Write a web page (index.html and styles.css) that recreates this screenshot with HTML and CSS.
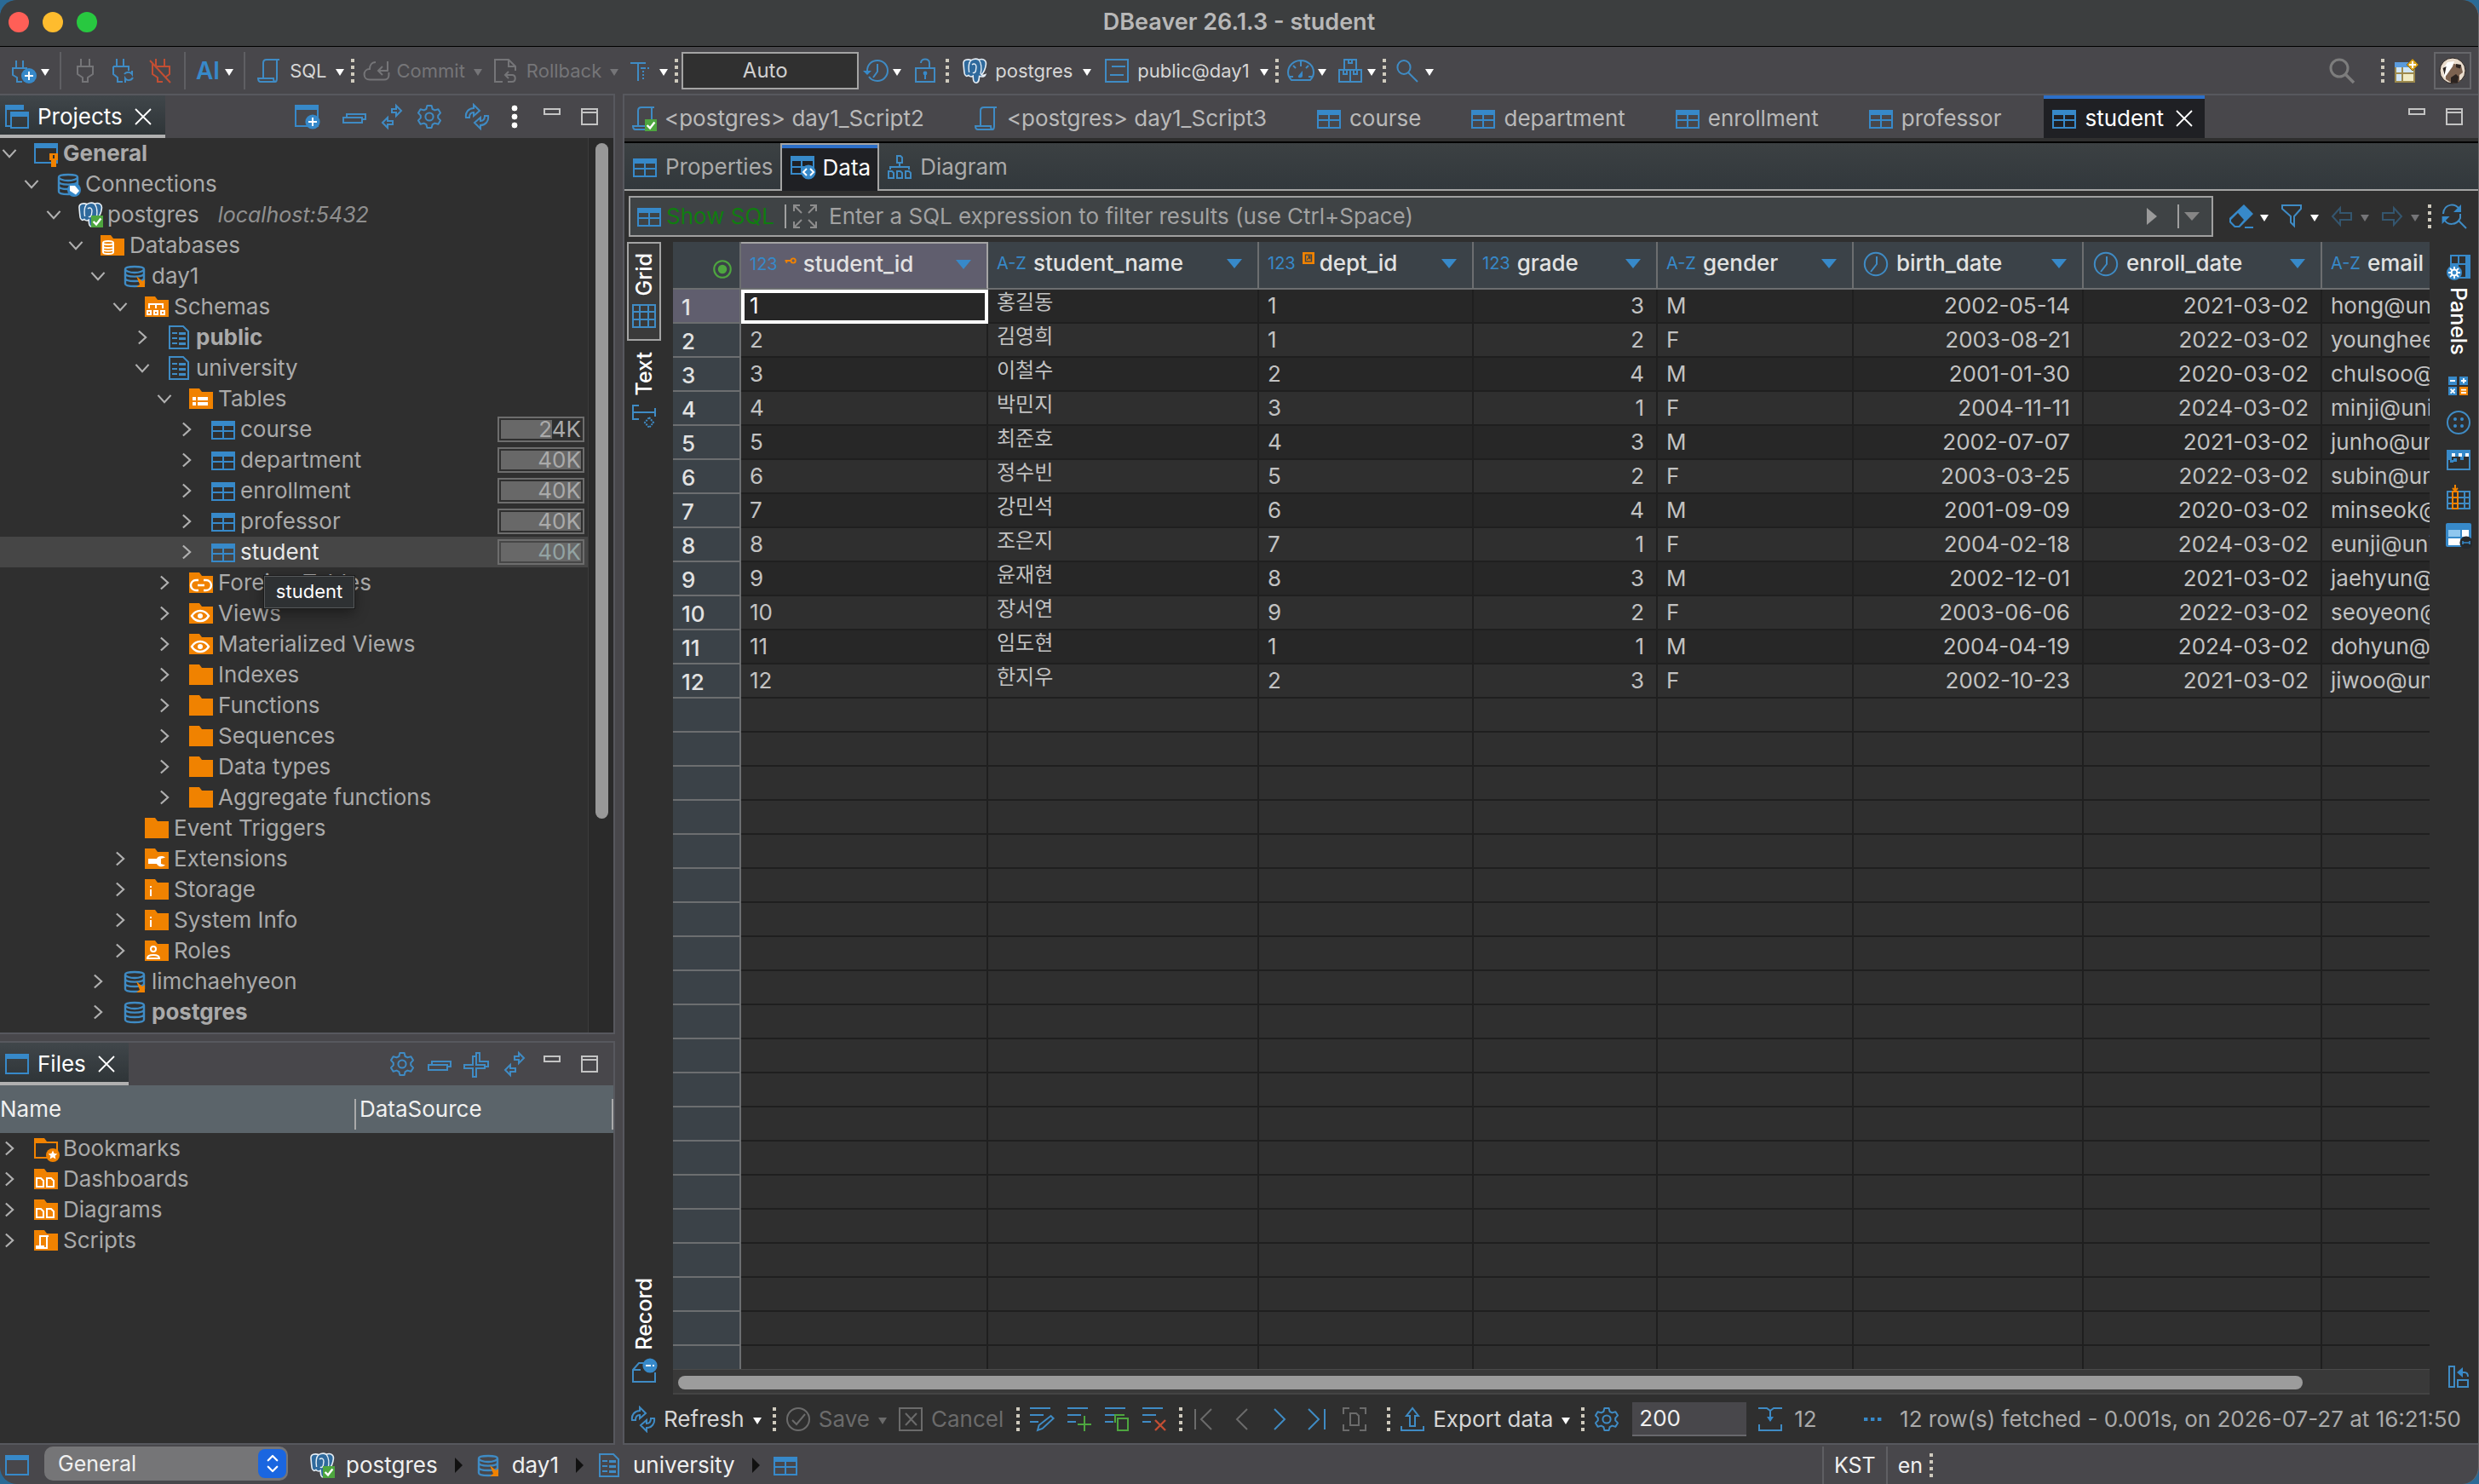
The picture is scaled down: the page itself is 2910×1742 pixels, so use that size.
FILE: index.html
```html
<!DOCTYPE html>
<html lang="en">
<head>
  <meta charset="UTF-8">
  <title>DBeaver 26.1.3 - student</title>
  <link rel="stylesheet" href="styles.css">
</head>
<body>
<svg class="sprite" xmlns="http://www.w3.org/2000/svg">
  <defs>
    <symbol id="table" viewBox="0 0 16 16"><path fill="#3789c9" d="M1 3h14v11H1zM2 6v2.500h5.500V6zm6.500 0v2.500H14V6zM2 9.500V13h5.500V9.500zm6.500 0V13H14V9.500z" fill-rule="evenodd"/></symbol>
    <symbol id="folder" viewBox="0 0 16 16"><path fill="#f08200" d="M1 2h6l1.500 2H15v10H1z"/></symbol>
    <symbol id="f-db" viewBox="0 0 16 16"><use href="#folder"/><path fill="none" stroke="#fff" d="M2.500 6.500v5.500c0 .7 1.300 1 3 1s3-.3 3-1V6.500c0-.7-1.300-1-3-1s-3 .3-3 1c0 .7 1.300 1 3 1s3-.3 3-1M2.500 8.500c0 .7 1.300 1 3 1s3-.3 3-1M2.500 10.300c0 .7 1.300 1 3 1s3-.3 3-1"/></symbol>
    <symbol id="f-schema" viewBox="0 0 16 16"><use href="#folder"/><path fill="none" stroke="#fff" d="M3.500 9V6.500h8V9M7.500 6.500V9M2.500 10.500h2v2h-2zM6.500 10.500h2v2h-2zM10.500 10.500h2v2h-2z"/></symbol>
    <symbol id="f-list" viewBox="0 0 16 16"><use href="#folder"/><path fill="#fff" d="M3 7h2v2H3zm3 0h6v2H6zM3 10h2v2H3zm3 0h6v2H6z"/></symbol>
    <symbol id="f-link" viewBox="0 0 16 16"><use href="#folder"/><path fill="none" stroke="#fff" stroke-width="1.200" d="M6.500 6.500H5a3 3 0 0 0 0 6h1.500M9.500 6.500H11a3 3 0 0 1 0 6H9.500M6 9.500h4"/></symbol>
    <symbol id="f-eye" viewBox="0 0 16 16"><use href="#folder"/><path fill="none" stroke="#fff" stroke-width="1.200" d="M2.500 9.500C5 5.500 10 5.500 12.500 9.500 10 13.500 5 13.500 2.500 9.500z"/><circle cx="7.500" cy="9.500" r="1.500" fill="#fff"/></symbol>
    <symbol id="f-wrench" viewBox="0 0 16 16"><use href="#folder"/><path fill="#fff" d="M3 8h5c.5-1.500 3-2.200 5-.8l-2.500.8v3l2.500.8c-2 1.500-4.500.8-5-.8H3z"/></symbol>
    <symbol id="f-info" viewBox="0 0 16 16"><use href="#folder"/><path fill="#fff" d="M4 6h1v1H4zm0 2h1v4H4z"/></symbol>
    <symbol id="f-user" viewBox="0 0 16 16"><use href="#folder"/><circle cx="6" cy="7" r="1.500" fill="none" stroke="#fff"/><path fill="none" stroke="#fff" d="M2.500 12.500c0-1.500 1.500-2 3.500-2s3.500.5 3.500 2z"/></symbol>
    <symbol id="f-docs" viewBox="0 0 16 16"><use href="#folder"/><path fill="none" stroke="#fff" d="M2.500 7.500H5l1.500 1.500v3.500h-4zM8.500 7.500H11l1.500 1.500v3.500h-4z"/></symbol>
    <symbol id="f-script" viewBox="0 0 16 16"><use href="#folder"/><path fill="none" stroke="#fff" d="M9.500 5.500h-5v5.500M2.500 11.500h4v1h-4zM8.500 5.500v7H6"/></symbol>
    <symbol id="f-star" viewBox="0 0 16 16"><path fill="#f08200" d="M1 2h6l1.500 2H15v10H1zm1 3v8h12V5z" fill-rule="evenodd"/><circle cx="12" cy="12" r="4" fill="#f08200"/><path fill="#fff" d="M12 9.300l.8 1.700 1.900.2-1.400 1.200.4 1.900-1.700-1-1.700 1 .4-1.900-1.400-1.200 1.900-.2z"/></symbol>
    <symbol id="db" viewBox="0 0 16 16"><path fill="none" stroke="#3f8bc4" stroke-width="1.200" d="M2.500 4v8.500c0 1 2.200 1.500 5.500 1.500s5.500-.5 5.500-1.500V4M2.500 4C2.500 3 5 2.500 8 2.500s5.500.5 5.500 1.500S11 6 8 6 2.500 5 2.500 4zM2.500 6.500C2.500 7.700 5 8.300 8 8.300s5.500-.6 5.500-1.800M2.500 9.200c0 1.200 2.500 1.800 5.500 1.800s5.500-.6 5.500-1.800"/></symbol>
    <symbol id="db-link" viewBox="0 0 16 16"><use href="#db"/><path fill="#f08200" d="M9 8l3.500 3 1.500-1v4.500h-5l2-1.500z"/></symbol>
    <symbol id="db-tag" viewBox="0 0 16 16"><use href="#db"/><circle cx="11.500" cy="11.500" r="4" fill="#3789c9"/><path fill="#fff" d="M9 9h3l2.500 3-2 2.200L9 12z"/></symbol>
    <symbol id="schema" viewBox="0 0 16 16"><path fill="none" stroke="#3f8bc4" d="M2.500 1.500h8l3 3v10h-11z"/><path fill="#3f8bc4" d="M4 5h3v1H4zm0 3h3v1H4zm0 3h3v1H4zM8 5h4v1.500H8zm0 3h4v1.500H8zm0 3h4v1.500H8z"/></symbol>
    <symbol id="window" viewBox="0 0 16 16"><path fill="#3789c9" d="M1 2h14v12H1zm1 3v8h12V5z" fill-rule="evenodd"/></symbol>
    <symbol id="project" viewBox="0 0 16 16"><use href="#window"/><path fill="#f08200" d="M10 8h5v4h-1v4h-3v-4h-1zm2 1v2h1V9z" fill-rule="evenodd"/></symbol>
    <symbol id="projects" viewBox="0 0 16 16"><path fill="#3789c9" d="M1 1h11v3H2v9h2v1H1zM4 5h11v10H4zm1 3v6h9V8z" fill-rule="evenodd"/></symbol>
    <symbol id="win-plus" viewBox="0 0 16 16"><path fill="#3789c9" d="M1 1h14v13H1zm1 3v9h12V4z" fill-rule="evenodd"/><circle cx="11.500" cy="11" r="4.300" fill="#3789c9"/><path stroke="#fff" d="M11.500 8.500v5M9 11h5"/></symbol>
    <symbol id="check-badge" viewBox="0 0 16 16"><path fill="#4ea63f" d="M8.500 8.500h7v7h-7z"/><path fill="none" stroke="#fff" stroke-width="1.200" d="M9.800 12l1.700 1.700 2.700-3.500"/></symbol>
    <symbol id="pg" viewBox="0 0 16 16"><path fill="#2f6a9d" stroke="#e6eef5" stroke-width=".8" d="M1.500 4C1.200 1.500 4 1 6 1.800 8 .8 9.500 1 10.500 1.600c2.500-1 4.500.4 4.200 2.600-.3 2.500-1.500 5-2.700 6.200.8.300 1.800.2 2.300 0-.6 1.300-2 1.300-3.500.9-.2 2-.2 3.600-1.800 3.800-1.700 0-1.800-1.500-1.900-4-.8.600-2 .3-2.600-.4-1 .8-1.700.6-2.300-.7C1.800 8.500 1.700 6 1.500 4z"/><path fill="none" stroke="#e6eef5" stroke-width=".7" d="M6 1.800C4.300 3.500 4.300 6 4.800 9M10.500 1.600c1.500 2 1.700 5.500 1 8.500M6.500 4.500c1-1 2.500-.5 2.500 1.200L8.700 8c-.2 1-.9 1.400-1.800 1.200"/></symbol>
    <symbol id="pg-ok" viewBox="0 0 16 16"><use href="#pg" /><use href="#check-badge"/></symbol>
    <symbol id="script" viewBox="0 0 16 16"><path fill="none" stroke="#3f8bc4" d="M14 1.500H6.500c-1.500 0-2 .5-2 2v9M1.500 12.500h9c0 1 .3 2 1 2H3c-1 0-1.500-.7-1.500-2zM12.500 1.500v11c0 1.300-.3 2-1 2"/></symbol>
    <symbol id="script-ok" viewBox="0 0 16 16"><use href="#script"/><use href="#check-badge"/></symbol>
    <symbol id="plug" viewBox="0 0 16 16"><path fill="none" stroke="currentColor" d="M5.500 1v4M10.500 1v4M3.500 5.500h9v4.500l-3 2v2.500h-3V12l-3-2z"/></symbol>
    <symbol id="plug-new" viewBox="0 0 16 16"><path fill="none" stroke="#3f8bc4" d="M3.500 2v4M7.500 2v4M1.500 6.500h8v2M1.500 6v4.500L4 12v2.500h3"/><circle cx="11" cy="11" r="4.500" fill="#3789c9"/><path stroke="#fff" d="M11 8.500v5M8.500 11h5"/></symbol>
    <symbol id="plug-re" viewBox="0 0 16 16"><path fill="none" stroke="#3f8bc4" d="M4.500 1v4M8.500 1v4M2.500 5.500h9V8M2.500 5.500V10l2.500 2v2.500h3M9 10c1-1.500 3.500-1.500 4.500 0V8M14 12c-1 2-3.500 2-4.500.5V15"/></symbol>
    <symbol id="plug-off" viewBox="0 0 16 16"><path fill="none" stroke="#c24e33" d="M5.500 1v4M10.500 1v4M3.500 4v6l3 2v2.500h3M5 5.500h8.500V10l-2 1.500M2 2l12 13"/></symbol>
    <symbol id="cloud" viewBox="0 0 16 16"><path fill="none" stroke="currentColor" d="M7.500 3C5 3 4 5 4 7 2 7 .8 8.500.8 10.200S2 13.300 4 13.300h8.500c1.500 0 2.700-1 2.700-2.500V9M14.500 2.500V8H9M11.500 5.500L9 8l2.500 2.500"/></symbol>
    <symbol id="rollback" viewBox="0 0 16 16"><path fill="none" stroke="currentColor" d="M6 14.500H1.500v-13h8l4 4V8M9.500 1.500v4h4M7.500 10.500h4c2.500 0 2.500 4 0 4H9M9.500 8.500l-2 2 2 2"/></symbol>
    <symbol id="tmode" viewBox="0 0 16 16"><path fill="none" stroke="#3f8bc4" d="M1 3.500h9M5.500 3v11"/><path fill="none" stroke="#3f8bc4" stroke-dasharray="1 1" d="M7 6.500h5M8.500 6v8"/></symbol>
    <symbol id="history" viewBox="0 0 16 16"><path fill="none" stroke="#3f8bc4" d="M3 8C3 4.500 5.500 2 9 2s6 2.700 6 6-2.700 6-6 6c-2 0-4-1-5-2.500M9 4v4.500L6.500 12"/><path fill="#3789c9" d="M.5 8h5L3 10.500z"/></symbol>
    <symbol id="lock" viewBox="0 0 16 16"><path fill="none" stroke="#3f8bc4" d="M2.500 6.500h11v8h-11zM5.500 3.500c0-3 5-3 5 0v3"/><circle cx="8" cy="9.500" r="1.200" fill="#3789c9"/><path stroke="#3789c9" d="M8 10v3"/></symbol>
    <symbol id="sheet" viewBox="0 0 16 16"><path fill="none" stroke="#3f8bc4" d="M1.500 1.500h13v13h-13zM5 5.500h8M4 10.500h8"/></symbol>
    <symbol id="gauge" viewBox="0 0 16 16"><path fill="none" stroke="#3f8bc4" d="M2.500 13.500C1 12 .5 10.500.5 9a7.500 7 0 0 1 15 0c0 1.500-.5 3-2 4.500zM8 2.500v3M3.500 5l1.500 1.500M12.500 5L11 6.500M1.500 11.500h2M12.500 11.500h2"/><path fill="#3789c9" d="M9 8v3c0 1.500-3 1.500-2.500 0z"/></symbol>
    <symbol id="boxes" viewBox="0 0 16 16"><path fill="none" stroke="#3f8bc4" d="M4.500 1.500h7v6h-7zM7 1.500v2h2v-2M1.500 7.500h13v7h-13zM8 7.500v7M4 8v2h2V8M10 8v2h2V8"/></symbol>
    <symbol id="search" viewBox="0 0 16 16"><ellipse cx="5.500" cy="6" rx="3.800" ry="4" fill="none" stroke="#3f8bc4"/><path stroke="#3f8bc4" d="M8 9l5.500 5.500"/></symbol>
    <symbol id="search-lg" viewBox="0 0 16 16"><circle cx="6.500" cy="6.500" r="5" fill="none" stroke="#7d7d7d" stroke-width="1.500"/><path stroke="#7d7d7d" stroke-width="1.800" d="M10 10l5 5"/></symbol>
    <symbol id="persp" viewBox="0 0 16 16"><path fill="#9d8a4d" d="M1 3h12v12H1z"/><path fill="#5b9bdc" d="M1 3h10v3H1z"/><path fill="#cfe5f5" d="M2 6h3v3H2zM6 6h6v3H6zM2 10h3v4H2z"/><path fill="#f1ecc4" d="M6 10h6v4H6z"/><path fill="#d9a520" stroke="#8a6513" stroke-width=".5" d="M11.500 1L15 4.500 11.500 8 8 4.500z"/><path stroke="#fff" d="M11.500 2.500v4M9.500 4.500h4"/></symbol>
    <symbol id="beaver" viewBox="0 0 16 16"><circle cx="8" cy="8" r="7.500" fill="#e9dccd" stroke="#2b2320" stroke-width=".5"/><path fill="#7c6250" d="M4 6l3-2.500 6 1.500 1 4-2 1.500v4l-4 1-4-2.500z"/><path fill="#fff" d="M5 3l4-.5-1 3-3.500 5L3 12 2.500 7z"/><path fill="#2b2320" d="M10 4l3 .5-.5 2.300L10 6zM2.300 6.500l2-1-1 5zM7 12l3-2 1.500 1.500-.5 3.500-4 .5z"/></symbol>
    <symbol id="collapse" viewBox="0 0 16 16"><path fill="none" stroke="#3f8bc4" d="M1.500 8.500h11v3h-11zM3.500 8V6.500h11v3H13"/></symbol>
    <symbol id="expand" viewBox="0 0 16 16"><path fill="none" stroke="#3f8bc4" d="M.5 8.500h5v-5h2v5h5v2h-5v5h-2v-5h-5zM7.500 3V1.500h2v5h5v3h-1.500"/></symbol>
    <symbol id="swap" viewBox="0 0 16 16"><path fill="none" stroke="#3f8bc4" d="M2.500 11.500l3-3v2h3v2h-3v2zM13.500 4.500l-3-3v2H8v2h2.500v2z"/></symbol>
    <symbol id="gear" viewBox="0 0 16 16"><path fill="none" stroke="#3f8bc4" stroke-linejoin="round" d="M6.700 1.500h2.600l.5 2 1.400.7 2-.6 1.300 2.200-1.400 1.500v1.400l1.400 1.500-1.300 2.200-2-.6-1.400.8-.5 1.900H6.700l-.5-1.900-1.400-.8-2 .6-1.300-2.200 1.400-1.500V7.300L1.500 5.800l1.300-2.200 2 .6 1.400-.7z"/><circle cx="8" cy="8" r="2.300" fill="none" stroke="#3f8bc4"/></symbol>
    <symbol id="refresh" viewBox="0 0 16 16"><path fill="none" stroke="#3f8bc4" d="M1.500 8.500c-.5-3 1.500-5.500 4.500-5.500V1l3.500 3.500L6 7.500V5.500c-1.500 0-2.500 1-2.500 3zM14.500 7.500c.5 3-1.500 5.500-4.500 5.500v2l-3.500-3.500L10 8.500v2c1.500 0 2.500-1 2.500-3z"/></symbol>
    <symbol id="kebab" viewBox="0 0 16 16"><g fill="#fff" stroke="#222" stroke-width=".4"><circle cx="8" cy="3" r="2"/><circle cx="8" cy="8" r="2"/><circle cx="8" cy="13" r="2"/></g></symbol>
    <symbol id="min" viewBox="0 0 16 16"><path fill="none" stroke="#c4c4c4" d="M3.500 3.500h9v3h-9z"/></symbol>
    <symbol id="max" viewBox="0 0 16 16"><path fill="none" stroke="#c4c4c4" d="M3.500 3.500h9v9h-9zM3.500 5.500h9"/></symbol>
    <symbol id="close" viewBox="0 0 16 16"><path fill="none" stroke="#fff" stroke-width=".9" d="M3.500 3.500l9 9M12.500 3.500l-9 9"/></symbol>
    <symbol id="chev-d" viewBox="0 0 16 16"><path fill="none" stroke="#b0b0b0" stroke-width="1.600" d="M2.500 5L8 11l5.500-6"/></symbol>
    <symbol id="chev-r" viewBox="0 0 16 16"><path fill="none" stroke="#b0b0b0" stroke-width="1.600" d="M5 2.500L11 8l-6 5.500"/></symbol>
    <symbol id="data" viewBox="0 0 16 16"><path fill="#3789c9" d="M1 1h14v11H1zM2 4v3h5V4zm6 0v3h6V4zM2 8v3h5V8z" fill-rule="evenodd"/><circle cx="11.500" cy="10.500" r="4.300" fill="#3789c9"/><path fill="none" stroke="#fff" d="M10.500 8.500l-2 2 2 2M12.500 8.500l2 2-2 2"/></symbol>
    <symbol id="diagram" viewBox="0 0 16 16"><path fill="none" stroke="#3f8bc4" d="M6.500 1.500h2l1 1v3h-3zM8 5.500v3M2.500 9.500V8h11v1.500M1.500 10.500h2l1 1v3h-3zM6.500 10.500h2l1 1v3h-3zM11.500 10.500h2l1 1v3h-3z"/></symbol>
    <symbol id="fullscreen" viewBox="0 0 16 16"><path fill="none" stroke="#8d8d8d" d="M1.500 5V1.500H5M2 2l4 4M11 1.500h3.500V5M14 2l-4 4M1.500 11v3.500H5M2 14l4-4M11 14.500h3.500V11M14 14l-4-4"/></symbol>
    <symbol id="eraser" viewBox="0 0 16 16"><path fill="#3789c9" d="M9.500 1L15 6.500 7 14.500H4L1 11.500V9zM6 6L2 10v1l2.500 2.500h2L9.500 10z" fill-rule="evenodd"/><path stroke="#3789c9" d="M10 14.500h5"/></symbol>
    <symbol id="funnel" viewBox="0 0 16 16"><path fill="none" stroke="#3f8bc4" d="M2.500 1.500h11v2L9.500 8v5.500l-2-2V8l-5-4.500z"/></symbol>
    <symbol id="left" viewBox="0 0 16 16"><path fill="none" stroke="#34566f" d="M2.500 8l4.500-5v3h6.500v4H7v3z"/></symbol>
    <symbol id="right" viewBox="0 0 16 16"><path fill="none" stroke="#34566f" d="M13.500 8L9 3v3H2.500v4H9v3z"/></symbol>
    <symbol id="re-search" viewBox="0 0 16 16"><path fill="none" stroke="#3f8bc4" d="M1.500 6.500C2 0 9.500 0 11 4M2 9.500c1.500 4 7.500 4 9.500-.5V6.500M10.500 10.500l4.500 4.500"/><path fill="#3789c9" d="M12 1v4.500H7.500zM.8 12.500V8h4.500z"/></symbol>
    <symbol id="clock" viewBox="0 0 16 16"><circle cx="8" cy="8" r="6.600" fill="none" stroke="#3f8bc4"/><path fill="none" stroke="#3f8bc4" d="M8.500 3.500V8L5 12.500"/></symbol>
    <symbol id="key" viewBox="0 0 8 8"><circle cx="5.800" cy="4" r="1.500" fill="none" stroke="#f08200" stroke-width="1.100"/><path fill="none" stroke="#f08200" stroke-width="1.100" d="M.3 4H4.500M1.300 4v1.500"/></symbol>
    <symbol id="fkey" viewBox="0 0 8 8"><path fill="#f08200" d="M0 0h8v8H0z"/><path fill="none" stroke="#3b4248" stroke-width=".8" d="M2 1.800h4v4.400H2zM3 5l2-2M3.500 2.800H5v2"/></symbol>
    <symbol id="grid" viewBox="0 0 16 16"><path fill="none" stroke="#3f8bc4" d="M1.500 1.500h13v13h-13zM1.500 5.500h13M1.500 10h13M5.500 1.500v13M10.500 1.500v13"/></symbol>
    <symbol id="text" viewBox="0 0 16 16"><path fill="none" stroke="#3f8bc4" d="M5 1.500H1.500v8H5M2 5.500h12.500M14.500 3v5"/><path fill="none" stroke="#3f8bc4" stroke-dasharray="1 .6" d="M11 8.500l2.500 3-2.500 3-2.500-3z"/></symbol>
    <symbol id="record" viewBox="0 0 16 16"><path fill="none" stroke="#3f8bc4" d="M8 3.500H5l-3.500 4v7h13V9M1.500 7.500H6"/><circle cx="11.500" cy="5" r="4.300" fill="#3789c9"/><path fill="#fff" d="M9 4.500h3v1H9zM13 4.500h1v1h-1z"/></symbol>
    <symbol id="panels" viewBox="0 0 16 16"><path fill="#3789c9" d="M3 1h12v14H3zM4 2v4h3.500V2zm4.500 0v4H12V2zM8 7v7h4V7z" fill-rule="evenodd"/><circle cx="5.500" cy="11.500" r="4.500" fill="#3789c9"/><circle cx="5.500" cy="11.500" r="1.700" fill="none" stroke="#fff"/><path stroke="#fff" stroke-width=".9" d="M5.500 8v1.500M5.500 13.500V15M2 11.500h1.500M7.500 11.500H9M3 9l1.200 1.200M6.800 12.800L8 14M8 9l-1.200 1.200M4.200 12.800L3 14"/></symbol>
    <symbol id="calc" viewBox="0 0 16 16"><path fill="#3789c9" d="M2 3h5v5H2zM8.500 3h5v5h-5zM2 9h5v5H2z"/><path fill="#f08200" d="M8.500 9h5v5h-5z"/><path stroke="#fff" stroke-width=".9" d="M3 5.500h3M9.500 5.500h3M11 4v3M3.300 10.300l2.500 2.500M5.800 10.300l-2.500 2.500M9.500 10.800h3M9.500 12.500h3"/></symbol>
    <symbol id="button" viewBox="0 0 16 16"><circle cx="8" cy="8" r="6.500" fill="none" stroke="#3f8bc4"/><g fill="#3789c9"><circle cx="6" cy="6" r="1"/><circle cx="10" cy="6" r="1"/><circle cx="6" cy="10" r="1"/><circle cx="10" cy="10" r="1"/></g></symbol>
    <symbol id="meta" viewBox="0 0 16 16"><path fill="none" stroke="#3f8bc4" d="M1.500 2.500h13v11h-13z"/><path fill="#3789c9" d="M1 2h14v4H1zM2 6h2v2H2zm3 1h2v2H5zm4-1h2v2H9zM3 8h2v1.500H3z"/><path fill="#fff" d="M4 4h2v2H4zm4 0h2v2H8zm4 0h2v2h-2z"/></symbol>
    <symbol id="colcut" viewBox="0 0 16 16"><path fill="none" stroke="#3f8bc4" d="M1.500 4.500h13v10h-13zM1.500 8h13M1.500 11.500h13M11.500 4v10"/><path fill="none" stroke="#f08200" d="M4.500 4.500h3v10h-3zM4.500 8h3M4.500 11.500h3M6 .5V4M4.500 2.500L6 4l1.500-1.500"/></symbol>
    <symbol id="panel2" viewBox="0 0 16 16"><rect x=".5" y="1" width="15" height="14" rx="1" fill="#3789c9"/><path fill="#8fc7ef" d="M2 5h7v4H2z"/><path fill="#fff" d="M10 5h4v4h-4zM2 10h7v4H2z"/><circle cx="12.500" cy="12.500" r="3.800" fill="#26292c"/><path stroke="#3789c9" stroke-width=".8" d="M10.500 12.500h4M10.500 11.500v2M14.500 11.500v2"/></symbol>
    <symbol id="layout" viewBox="0 0 16 16"><path fill="none" stroke="#3f8bc4" d="M2.500 1.500h3v12h-3zM7.500 9.500h6v4h-6zM8 5h3.500c1.500 0 2 1 2 2.500"/><path fill="#3789c9" d="M10.500 2v6L7 5z"/></symbol>
    <symbol id="check" viewBox="0 0 16 16"><circle cx="8" cy="8" r="6.500" fill="none" stroke="currentColor"/><path fill="none" stroke="currentColor" d="M4.500 8.500l2.500 2.500 5-6"/></symbol>
    <symbol id="xbox" viewBox="0 0 16 16"><path fill="none" stroke="currentColor" d="M1.500 1.500h13v13h-13zM5 4.500l6.500 7M11.500 4.500L5 11.500"/></symbol>
    <symbol id="lines" viewBox="0 0 16 16"><path stroke="#3f8bc4" d="M1 1.500h12M1 5.500h8M1 9.500h5"/></symbol>
    <symbol id="row-edit" viewBox="0 0 16 16"><use href="#lines"/><path fill="none" stroke="#3f8bc4" d="M5.500 14.500l.8-3 7-5.500 1.500 1.500-6.500 6z"/></symbol>
    <symbol id="row-add" viewBox="0 0 16 16"><use href="#lines"/><path stroke="#4ea63f" d="M11 6v9M7 11h8"/></symbol>
    <symbol id="row-copy" viewBox="0 0 16 16"><use href="#lines"/><path fill="none" stroke="#4ea63f" d="M7 10V5.500h5.500M8.500 7.500h6v7h-6z"/></symbol>
    <symbol id="row-del" viewBox="0 0 16 16"><use href="#lines"/><path stroke="#c24e33" stroke-width="1.200" d="M8.500 8.500l6 6M14.500 8.500l-6 6"/></symbol>
    <symbol id="first" viewBox="0 0 16 16"><path fill="none" stroke="#6b6b6b" d="M2.500 2v12M12 2L6 8l6 6"/></symbol>
    <symbol id="prev" viewBox="0 0 16 16"><path fill="none" stroke="#6b6b6b" d="M11 2L5 8l6 6"/></symbol>
    <symbol id="next" viewBox="0 0 16 16"><path fill="none" stroke="#3f8bc4" d="M5 2l6 6-6 6"/></symbol>
    <symbol id="last" viewBox="0 0 16 16"><path fill="none" stroke="#3f8bc4" d="M3 2l6 6-6 6M12.500 2v12"/></symbol>
    <symbol id="focus" viewBox="0 0 16 16"><path fill="none" stroke="#6b6b6b" d="M1.500 5V1.500H5M11 1.500h3.500V5M1.500 11v3.500H5M11 14.500h3.500V11M5.500 4.500H9l1.500 1.500v5.500h-5z"/></symbol>
    <symbol id="export" viewBox="0 0 16 16"><path fill="none" stroke="#3f8bc4" d="M8 1.500L4.500 6h2v6h3V6h2zM1.500 12v2.500h13V12"/></symbol>
    <symbol id="count" viewBox="0 0 16 16"><path fill="none" stroke="#3f8bc4" d="M1 1.500h5l2 1.500 2-1.500h5M8 3v6M1.500 11v3.500h13V11"/><path fill="#3789c9" d="M6 6.500h4L8 9.500z"/></symbol>
    <symbol id="more" viewBox="0 0 16 16"><path fill="#3789c9" d="M3 7h2.200v2H3zm4 0h2.200v2H7zm4 0h2.200v2H11z"/></symbol>
    <symbol id="target" viewBox="0 0 16 16"><circle cx="8" cy="8" r="6.500" fill="none" stroke="#4ea63f" stroke-width="1.400"/><circle cx="8" cy="8" r="3.500" fill="#4ea63f"/></symbol>
    <symbol id="updown" viewBox="0 0 16 16"><path fill="none" stroke="#fff" stroke-width="1.500" stroke-linecap="round" stroke-linejoin="round" d="M4.500 5.500L8 2l3.500 3.500M4.500 10.500L8 14l3.500-3.500"/></symbol>
  </defs>
</svg>

<div class="window">
  <header class="titlebar">
    <div class="lights"><span class="light red"></span><span class="light yellow"></span><span class="light green"></span></div>
    <h1>DBeaver 26.1.3 - student</h1>
  </header>

  <div class="toolbar">
    <button class="tool" aria-label="New connection"><svg class="icon"><use href="#plug-new"/></svg><i class="arrow"></i></button>
    <span class="sep"></span>
    <button class="tool off" aria-label="Connect"><svg class="icon"><use href="#plug"/></svg></button>
    <button class="tool" aria-label="Reconnect"><svg class="icon"><use href="#plug-re"/></svg></button>
    <button class="tool" aria-label="Disconnect"><svg class="icon"><use href="#plug-off"/></svg></button>
    <span class="sep"></span>
    <button class="tool ai">AI<i class="arrow"></i></button>
    <span class="sep"></span>
    <button class="tool"><svg class="icon"><use href="#script"/></svg><span class="label">SQL</span><i class="arrow"></i></button>
    <span class="dots"></span>
    <button class="tool off"><svg class="icon"><use href="#cloud"/></svg><span class="label">Commit</span><i class="arrow"></i></button>
    <button class="tool off"><svg class="icon"><use href="#rollback"/></svg><span class="label">Rollback</span><i class="arrow"></i></button>
    <button class="tool" aria-label="Transaction mode"><svg class="icon"><use href="#tmode"/></svg><i class="arrow"></i></button>
    <span class="dots"></span>
    <input class="mode" type="text" value="Auto" aria-label="Commit mode">
    <button class="tool" aria-label="History"><svg class="icon"><use href="#history"/></svg><i class="arrow"></i></button>
    <button class="tool" aria-label="Lock"><svg class="icon"><use href="#lock"/></svg></button>
    <span class="dots"></span>
    <button class="tool connection"><svg class="icon"><use href="#pg"/></svg><span class="label">postgres</span><i class="arrow"></i></button>
    <button class="tool connection"><svg class="icon"><use href="#sheet"/></svg><span class="label">public@day1</span><i class="arrow"></i></button>
    <span class="dots"></span>
    <button class="tool" aria-label="Dashboard"><svg class="icon"><use href="#gauge"/></svg><i class="arrow"></i></button>
    <button class="tool" aria-label="Tasks"><svg class="icon"><use href="#boxes"/></svg><i class="arrow"></i></button>
    <span class="dots"></span>
    <button class="tool" aria-label="Search"><svg class="icon"><use href="#search"/></svg><i class="arrow"></i></button>
    <div class="toolbar-end">
      <button class="tool" aria-label="Find"><svg class="icon"><use href="#search-lg"/></svg></button>
      <span class="dots"></span>
      <button class="tool" aria-label="Open perspective"><svg class="icon"><use href="#persp"/></svg></button>
      <button class="tool perspective" aria-label="DBeaver perspective"><svg class="icon"><use href="#beaver"/></svg></button>
    </div>
  </div>

  <main class="workspace">
    <div class="side">
      <section class="panel projects">
        <div class="panel-head">
          <div class="view-tab"><svg class="icon"><use href="#projects"/></svg><span>Projects</span><svg class="icon"><use href="#close"/></svg></div>
          <div class="panel-tools">
            <svg class="icon"><use href="#win-plus"/></svg>
            <svg class="icon wide"><use href="#collapse"/></svg>
            <svg class="icon"><use href="#swap"/></svg>
            <svg class="icon"><use href="#gear"/></svg>
            <svg class="icon wide"><use href="#refresh"/></svg>
            <svg class="icon"><use href="#kebab"/></svg>
            <svg class="icon"><use href="#min"/></svg>
            <svg class="icon"><use href="#max"/></svg>
          </div>
        </div>
        <div class="panel-body">
          <ul class="tree">
            <li class="l0"><svg class="chev"><use href="#chev-d"/></svg><svg class="icon"><use href="#project"/></svg><b>General</b></li>
            <li class="l1"><svg class="chev"><use href="#chev-d"/></svg><svg class="icon"><use href="#db-tag"/></svg>Connections</li>
            <li class="l2"><svg class="chev"><use href="#chev-d"/></svg><svg class="icon"><use href="#pg-ok"/></svg>postgres<em>localhost:5432</em></li>
            <li class="l3"><svg class="chev"><use href="#chev-d"/></svg><svg class="icon"><use href="#f-db"/></svg>Databases</li>
            <li class="l4"><svg class="chev"><use href="#chev-d"/></svg><svg class="icon"><use href="#db-link"/></svg>day1</li>
            <li class="l5"><svg class="chev"><use href="#chev-d"/></svg><svg class="icon"><use href="#f-schema"/></svg>Schemas</li>
            <li class="l6"><svg class="chev"><use href="#chev-r"/></svg><svg class="icon"><use href="#schema"/></svg><b>public</b></li>
            <li class="l6"><svg class="chev"><use href="#chev-d"/></svg><svg class="icon"><use href="#schema"/></svg>university</li>
            <li class="l7"><svg class="chev"><use href="#chev-d"/></svg><svg class="icon"><use href="#f-list"/></svg>Tables</li>
            <li class="l8"><svg class="chev"><use href="#chev-r"/></svg><svg class="icon"><use href="#table"/></svg>course<span class="size part">24K</span></li>
            <li class="l8"><svg class="chev"><use href="#chev-r"/></svg><svg class="icon"><use href="#table"/></svg>department<span class="size">40K</span></li>
            <li class="l8"><svg class="chev"><use href="#chev-r"/></svg><svg class="icon"><use href="#table"/></svg>enrollment<span class="size">40K</span></li>
            <li class="l8"><svg class="chev"><use href="#chev-r"/></svg><svg class="icon"><use href="#table"/></svg>professor<span class="size">40K</span></li>
            <li class="l8 selected"><svg class="chev"><use href="#chev-r"/></svg><svg class="icon"><use href="#table"/></svg>student<span class="size">40K</span><span class="tooltip" role="tooltip">student</span></li>
            <li class="l7"><svg class="chev"><use href="#chev-r"/></svg><svg class="icon"><use href="#f-link"/></svg>Foreign Tables</li>
            <li class="l7"><svg class="chev"><use href="#chev-r"/></svg><svg class="icon"><use href="#f-eye"/></svg>Views</li>
            <li class="l7"><svg class="chev"><use href="#chev-r"/></svg><svg class="icon"><use href="#f-eye"/></svg>Materialized Views</li>
            <li class="l7"><svg class="chev"><use href="#chev-r"/></svg><svg class="icon"><use href="#folder"/></svg>Indexes</li>
            <li class="l7"><svg class="chev"><use href="#chev-r"/></svg><svg class="icon"><use href="#folder"/></svg>Functions</li>
            <li class="l7"><svg class="chev"><use href="#chev-r"/></svg><svg class="icon"><use href="#folder"/></svg>Sequences</li>
            <li class="l7"><svg class="chev"><use href="#chev-r"/></svg><svg class="icon"><use href="#folder"/></svg>Data types</li>
            <li class="l7"><svg class="chev"><use href="#chev-r"/></svg><svg class="icon"><use href="#folder"/></svg>Aggregate functions</li>
            <li class="l5"><svg class="chev"></svg><svg class="icon"><use href="#folder"/></svg>Event Triggers</li>
            <li class="l5"><svg class="chev"><use href="#chev-r"/></svg><svg class="icon"><use href="#f-wrench"/></svg>Extensions</li>
            <li class="l5"><svg class="chev"><use href="#chev-r"/></svg><svg class="icon"><use href="#f-info"/></svg>Storage</li>
            <li class="l5"><svg class="chev"><use href="#chev-r"/></svg><svg class="icon"><use href="#f-info"/></svg>System Info</li>
            <li class="l5"><svg class="chev"><use href="#chev-r"/></svg><svg class="icon"><use href="#f-user"/></svg>Roles</li>
            <li class="l4"><svg class="chev"><use href="#chev-r"/></svg><svg class="icon"><use href="#db-link"/></svg>limchaehyeon</li>
            <li class="l4"><svg class="chev"><use href="#chev-r"/></svg><svg class="icon"><use href="#db"/></svg><b>postgres</b></li>
          </ul>
          <div class="vscroll"><div class="thumb"></div></div>
        </div>
      </section>

      <section class="panel files">
        <div class="panel-head">
          <div class="view-tab"><svg class="icon"><use href="#window"/></svg><span>Files</span><svg class="icon"><use href="#close"/></svg></div>
          <div class="panel-tools">
            <svg class="icon"><use href="#gear"/></svg>
            <svg class="icon"><use href="#collapse"/></svg>
            <svg class="icon"><use href="#expand"/></svg>
            <svg class="icon"><use href="#swap"/></svg>
            <svg class="icon"><use href="#min"/></svg>
            <svg class="icon"><use href="#max"/></svg>
          </div>
        </div>
        <table class="file-list">
          <thead><tr><th>Name</th><th>DataSource</th></tr></thead>
          <tbody>
            <tr><td><div><svg class="chev"><use href="#chev-r"/></svg><svg class="icon"><use href="#f-star"/></svg>Bookmarks</div></td><td></td></tr>
            <tr><td><div><svg class="chev"><use href="#chev-r"/></svg><svg class="icon"><use href="#f-docs"/></svg>Dashboards</div></td><td></td></tr>
            <tr><td><div><svg class="chev"><use href="#chev-r"/></svg><svg class="icon"><use href="#f-docs"/></svg>Diagrams</div></td><td></td></tr>
            <tr><td><div><svg class="chev"><use href="#chev-r"/></svg><svg class="icon"><use href="#f-script"/></svg>Scripts</div></td><td></td></tr>
          </tbody>
        </table>
      </section>
    </div>

    <section class="panel editor">
      <nav class="editor-tabs">
        <a href="#"><svg class="icon"><use href="#script-ok"/></svg>&lt;postgres&gt; day1_Script2</a>
        <a href="#"><svg class="icon"><use href="#script"/></svg>&lt;postgres&gt; day1_Script3</a>
        <a href="#"><svg class="icon"><use href="#table"/></svg>course</a>
        <a href="#"><svg class="icon"><use href="#table"/></svg>department</a>
        <a href="#"><svg class="icon"><use href="#table"/></svg>enrollment</a>
        <a href="#"><svg class="icon"><use href="#table"/></svg>professor</a>
        <a href="#" class="active"><svg class="icon"><use href="#table"/></svg>student<svg class="icon"><use href="#close"/></svg></a>
        <div class="panel-tools">
          <svg class="icon"><use href="#min"/></svg>
          <svg class="icon"><use href="#max"/></svg>
        </div>
      </nav>

      <nav class="sub-tabs">
        <a href="#"><svg class="icon"><use href="#table"/></svg>Properties</a>
        <a href="#" class="active"><svg class="icon"><use href="#data"/></svg>Data</a>
        <a href="#"><svg class="icon"><use href="#diagram"/></svg>Diagram</a>
      </nav>

      <div class="filter-row">
        <div class="filter">
          <svg class="icon"><use href="#table"/></svg>
          <a href="#" class="show-sql">Show SQL</a>
          <span class="bar"></span>
          <svg class="icon"><use href="#fullscreen"/></svg>
          <input type="text" aria-label="Filter" placeholder="Enter a SQL expression to filter results (use Ctrl+Space)">
          <i class="play"></i>
          <span class="bar"></span>
          <i class="drop"></i>
        </div>
        <div class="filter-tools">
          <button class="tool" aria-label="Clear filters"><svg class="icon"><use href="#eraser"/></svg><i class="arrow"></i></button>
          <button class="tool" aria-label="Filters"><svg class="icon"><use href="#funnel"/></svg><i class="arrow"></i></button>
          <button class="tool off" aria-label="Back"><svg class="icon"><use href="#left"/></svg><i class="arrow"></i></button>
          <button class="tool off" aria-label="Forward"><svg class="icon"><use href="#right"/></svg><i class="arrow"></i></button>
          <span class="dots"></span>
          <button class="tool" aria-label="Refresh search"><svg class="icon"><use href="#re-search"/></svg></button>
        </div>
      </div>

      <div class="result">
        <div class="modes">
          <button class="vtab active"><span>Grid</span><svg class="icon"><use href="#grid"/></svg></button>
          <button class="vtab"><span>Text</span><svg class="icon"><use href="#text"/></svg></button>
          <button class="vtab record"><span>Record</span><svg class="icon"><use href="#record"/></svg></button>
        </div>

        <div class="grid-wrap">
          <div class="grid-clip">
            <table class="grid">
              <colgroup><col class="c-num"><col class="c-id"><col class="c-name"><col class="c-dept"><col class="c-grade"><col class="c-gender"><col class="c-birth"><col class="c-enroll"><col></colgroup>
              <thead>
                <tr>
                  <th class="corner"><svg class="icon"><use href="#target"/></svg></th>
                  <th class="current"><div><span class="type">123</span><svg class="key"><use href="#key"/></svg>student_id<i class="sort"></i></div></th>
                  <th><div><span class="type">A-Z</span>student_name<i class="sort"></i></div></th>
                  <th><div><span class="type">123</span><svg class="key fk"><use href="#fkey"/></svg>dept_id<i class="sort"></i></div></th>
                  <th><div><span class="type">123</span>grade<i class="sort"></i></div></th>
                  <th><div><span class="type">A-Z</span>gender<i class="sort"></i></div></th>
                  <th><div><svg class="icon"><use href="#clock"/></svg>birth_date<i class="sort"></i></div></th>
                  <th><div><svg class="icon"><use href="#clock"/></svg>enroll_date<i class="sort"></i></div></th>
                  <th><div><span class="type">A-Z</span>email</div></th>
                </tr>
              </thead>
              <tbody>
                <tr class="current"><th>1</th><td class="focus">1</td><td class="ko">홍길동</td><td>1</td><td class="num">3</td><td>M</td><td class="num">2002-05-14</td><td class="num">2021-03-02</td><td>hong@un</td></tr>
                <tr><th>2</th><td>2</td><td class="ko">김영희</td><td>1</td><td class="num">2</td><td>F</td><td class="num">2003-08-21</td><td class="num">2022-03-02</td><td>younghee</td></tr>
                <tr><th>3</th><td>3</td><td class="ko">이철수</td><td>2</td><td class="num">4</td><td>M</td><td class="num">2001-01-30</td><td class="num">2020-03-02</td><td>chulsoo@</td></tr>
                <tr><th>4</th><td>4</td><td class="ko">박민지</td><td>3</td><td class="num">1</td><td>F</td><td class="num">2004-11-11</td><td class="num">2024-03-02</td><td>minji@uni</td></tr>
                <tr><th>5</th><td>5</td><td class="ko">최준호</td><td>4</td><td class="num">3</td><td>M</td><td class="num">2002-07-07</td><td class="num">2021-03-02</td><td>junho@un</td></tr>
                <tr><th>6</th><td>6</td><td class="ko">정수빈</td><td>5</td><td class="num">2</td><td>F</td><td class="num">2003-03-25</td><td class="num">2022-03-02</td><td>subin@un</td></tr>
                <tr><th>7</th><td>7</td><td class="ko">강민석</td><td>6</td><td class="num">4</td><td>M</td><td class="num">2001-09-09</td><td class="num">2020-03-02</td><td>minseok@</td></tr>
                <tr><th>8</th><td>8</td><td class="ko">조은지</td><td>7</td><td class="num">1</td><td>F</td><td class="num">2004-02-18</td><td class="num">2024-03-02</td><td>eunji@uni</td></tr>
                <tr><th>9</th><td>9</td><td class="ko">윤재현</td><td>8</td><td class="num">3</td><td>M</td><td class="num">2002-12-01</td><td class="num">2021-03-02</td><td>jaehyun@</td></tr>
                <tr><th>10</th><td>10</td><td class="ko">장서연</td><td>9</td><td class="num">2</td><td>F</td><td class="num">2003-06-06</td><td class="num">2022-03-02</td><td>seoyeon@</td></tr>
                <tr><th>11</th><td>11</td><td class="ko">임도현</td><td>1</td><td class="num">1</td><td>M</td><td class="num">2004-04-19</td><td class="num">2024-03-02</td><td>dohyun@u</td></tr>
                <tr><th>12</th><td>12</td><td class="ko">한지우</td><td>2</td><td class="num">3</td><td>F</td><td class="num">2002-10-23</td><td class="num">2021-03-02</td><td>jiwoo@un</td></tr>
              </tbody>
              <tbody class="empty">
                <tr><th></th><td></td><td></td><td></td><td></td><td></td><td></td><td></td><td></td></tr>
                <tr><th></th><td></td><td></td><td></td><td></td><td></td><td></td><td></td><td></td></tr>
                <tr><th></th><td></td><td></td><td></td><td></td><td></td><td></td><td></td><td></td></tr>
                <tr><th></th><td></td><td></td><td></td><td></td><td></td><td></td><td></td><td></td></tr>
                <tr><th></th><td></td><td></td><td></td><td></td><td></td><td></td><td></td><td></td></tr>
                <tr><th></th><td></td><td></td><td></td><td></td><td></td><td></td><td></td><td></td></tr>
                <tr><th></th><td></td><td></td><td></td><td></td><td></td><td></td><td></td><td></td></tr>
                <tr><th></th><td></td><td></td><td></td><td></td><td></td><td></td><td></td><td></td></tr>
                <tr><th></th><td></td><td></td><td></td><td></td><td></td><td></td><td></td><td></td></tr>
                <tr><th></th><td></td><td></td><td></td><td></td><td></td><td></td><td></td><td></td></tr>
                <tr><th></th><td></td><td></td><td></td><td></td><td></td><td></td><td></td><td></td></tr>
                <tr><th></th><td></td><td></td><td></td><td></td><td></td><td></td><td></td><td></td></tr>
                <tr><th></th><td></td><td></td><td></td><td></td><td></td><td></td><td></td><td></td></tr>
                <tr><th></th><td></td><td></td><td></td><td></td><td></td><td></td><td></td><td></td></tr>
                <tr><th></th><td></td><td></td><td></td><td></td><td></td><td></td><td></td><td></td></tr>
                <tr><th></th><td></td><td></td><td></td><td></td><td></td><td></td><td></td><td></td></tr>
                <tr><th></th><td></td><td></td><td></td><td></td><td></td><td></td><td></td><td></td></tr>
                <tr><th></th><td></td><td></td><td></td><td></td><td></td><td></td><td></td><td></td></tr>
                <tr><th></th><td></td><td></td><td></td><td></td><td></td><td></td><td></td><td></td></tr>
                <tr><th></th><td></td><td></td><td></td><td></td><td></td><td></td><td></td><td></td></tr>
              </tbody>
            </table>
          </div>
          <div class="hscroll"><div class="thumb"></div></div>
        </div>

        <div class="side-icons">
          <button class="vtab right"><svg class="icon"><use href="#panels"/></svg><span>Panels</span></button>
          <svg class="icon"><use href="#calc"/></svg>
          <svg class="icon"><use href="#button"/></svg>
          <svg class="icon"><use href="#meta"/></svg>
          <svg class="icon"><use href="#colcut"/></svg>
          <svg class="icon"><use href="#panel2"/></svg>
          <svg class="icon bottom"><use href="#layout"/></svg>
        </div>
      </div>

      <div class="result-bar">
        <button class="tool"><svg class="icon"><use href="#refresh"/></svg><span class="label">Refresh</span><i class="arrow"></i></button>
        <span class="dots"></span>
        <button class="tool off"><svg class="icon"><use href="#check"/></svg><span class="label">Save</span><i class="arrow"></i></button>
        <button class="tool off"><svg class="icon"><use href="#xbox"/></svg><span class="label">Cancel</span></button>
        <span class="dots"></span>
        <button class="tool" aria-label="Edit row"><svg class="icon"><use href="#row-edit"/></svg></button>
        <button class="tool" aria-label="Add row"><svg class="icon"><use href="#row-add"/></svg></button>
        <button class="tool" aria-label="Duplicate row"><svg class="icon"><use href="#row-copy"/></svg></button>
        <button class="tool" aria-label="Delete row"><svg class="icon"><use href="#row-del"/></svg></button>
        <span class="dots"></span>
        <button class="tool" aria-label="First"><svg class="icon"><use href="#first"/></svg></button>
        <button class="tool" aria-label="Previous"><svg class="icon"><use href="#prev"/></svg></button>
        <button class="tool" aria-label="Next"><svg class="icon"><use href="#next"/></svg></button>
        <button class="tool" aria-label="Last"><svg class="icon"><use href="#last"/></svg></button>
        <button class="tool" aria-label="Focus"><svg class="icon"><use href="#focus"/></svg></button>
        <span class="dots far"></span>
        <button class="tool"><svg class="icon"><use href="#export"/></svg><span class="label">Export data</span><i class="arrow"></i></button>
        <span class="dots"></span>
        <button class="tool" aria-label="Settings"><svg class="icon"><use href="#gear"/></svg></button>
        <input class="limit" type="text" value="200" aria-label="Fetch size">
        <button class="tool count"><svg class="icon"><use href="#count"/></svg><span class="label">12</span></button>
        <p class="status"><svg class="icon"><use href="#more"/></svg>12 row(s) fetched - 0.001s, on 2026-07-27 at 16:21:50</p>
      </div>
    </section>
  </main>

  <footer class="statusbar">
    <svg class="icon"><use href="#window"/></svg>
    <div class="picker">
      <select aria-label="Project"><option>General</option></select>
      <span class="knob"><svg><use href="#updown"/></svg></span>
    </div>
    <svg class="icon"><use href="#pg-ok"/></svg><a href="#">postgres</a><i class="crumb"></i>
    <svg class="icon"><use href="#db-link"/></svg><a href="#">day1</a><i class="crumb"></i>
    <svg class="icon"><use href="#schema"/></svg><a href="#">university</a><i class="crumb"></i>
    <svg class="icon"><use href="#table"/></svg>
    <div class="locale"><span>KST</span><span>en</span><i class="dots"></i></div>
  </footer>
</div>
</body>
</html>
```
FILE: styles.css
```css
:root {
  --bar: #48474b;
  --bg: #2f2f2f;
  --line: #57585e;
  --head: #3b4248;
  --text: #aaaaaa;
  --blue: #3789c9;
}

* {
  margin: 0;
  padding: 0;
  box-sizing: border-box;
}

body {
  font-family: Inter, "Noto Sans CJK KR", sans-serif;
  font-size: 26px;
  line-height: 32px;
  color: var(--text);
  background: #2a6a96;
  height: 100vh;
  overflow: hidden;
}

.sprite {
  position: absolute;
  width: 0;
  height: 0;
}

.window {
  height: 100vh;
  display: flex;
  flex-direction: column;
  background: var(--bar);
  border-radius: 20px;
  border-right: 1px solid #6a6a6c;
  overflow: hidden;
}

button,
input,
select {
  font: inherit;
  color: inherit;
  background: none;
  border: none;
  outline: none;
}

a {
  color: inherit;
  text-decoration: none;
}

.icon {
  width: 32px;
  height: 32px;
  flex: none;
}

/* title bar */
.titlebar {
  flex: none;
  height: 55px;
  background: #3c3e3f;
  border-bottom: 1px solid #000;
  display: grid;
  grid-template-columns: 1fr auto 1fr;
  align-items: center;
}

.titlebar h1 {
  padding-bottom: 2px;
  font-size: 27px;
  font-weight: 600;
  color: #b8b8b8;
}

.lights {
  display: flex;
  gap: 16px;
  padding: 0 0 2px 10px;
}

.light {
  width: 24px;
  height: 24px;
  border-radius: 50%;
}

.red { background: #ff5f57; }
.yellow { background: #febc2e; }
.green { background: #28c840; }

/* toolbars */
.toolbar {
  flex: none;
  height: 55px;
  display: flex;
  align-items: center;
  font-size: 22px;
}

.tool {
  display: flex;
  align-items: center;
  flex: none;
  margin-left: 12px;
  color: #d6d6d6;
  white-space: nowrap;
}

.tool .label {
  margin: 0 2px 0 8px;
}

.off {
  color: #757578;
}

.arrow {
  margin: 4px 0 0 6px;
  border: 5px solid transparent;
  border-top: 8px solid #fff;
  border-bottom: 0;
}

.icon + .arrow {
  margin-left: 4px;
}

.label + .arrow {
  margin-left: 8px;
}

.off .arrow {
  border-top-color: #757578;
}

.sep {
  width: 2px;
  height: 44px;
  margin-left: 12px;
  background: #5f5f63;
}

.dots {
  flex: none;
  width: 4px;
  height: 28px;
  margin-left: 8px;
  background: repeating-linear-gradient(#cfcabd 0 4px, transparent 4px 8px);
}

.dots + .tool {
  margin-left: 10px;
}

.toolbar .connection {
  margin-left: 14px;
}

.connection .arrow {
  margin-left: 10px;
}

.ai {
  font-size: 28px;
  font-weight: 600;
  color: var(--blue);
}

.mode {
  width: 208px;
  height: 44px;
  margin: 0 -8px 0 4px;
  padding-right: 12px;
  border: 2px solid #a4a4a4;
  background: #303030;
  color: #d0d0d0;
  font-size: 24px;
  text-align: center;
}

.toolbar-end {
  margin-left: auto;
  display: flex;
  align-items: center;
  padding-right: 8px;
}

.toolbar-end .dots {
  margin-left: 30px;
}

.toolbar-end .perspective {
  width: 44px;
  height: 44px;
  margin-left: 16px;
  justify-content: center;
  border: 2px solid #66666a;
}

/* workspace */
.workspace {
  flex: 1;
  min-height: 0;
  display: flex;
  gap: 9px;
}

.side {
  flex: none;
  width: 722px;
  display: flex;
  flex-direction: column;
  gap: 8px;
}

.panel {
  display: flex;
  flex-direction: column;
  min-height: 0;
  border: 2px solid var(--line);
  border-left: none;
  background: var(--bg);
}

.projects {
  flex: 1;
}

.files {
  flex: none;
  height: 474px;
}

.panel-head {
  flex: none;
  height: 50px;
  display: flex;
  align-items: center;
  background: var(--bar);
}

.view-tab {
  align-self: stretch;
  display: flex;
  align-items: center;
  gap: 8px;
  padding: 4px 10px 0 4px;
  background: linear-gradient(#40464a, #2f3538);
  border-bottom: 4px solid #b0b0b0;
  color: #fff;
}

.panel-tools {
  margin-left: auto;
  display: flex;
  gap: 12px;
  padding-right: 12px;
}

.panel-tools .wide {
  margin-left: 12px;
}

.panel-body {
  flex: 1;
  min-height: 0;
  display: flex;
}

.tree {
  flex: 1;
  list-style: none;
}

.tree li {
  position: relative;
  height: 36px;
  display: flex;
  align-items: center;
}

.tree b {
  font-weight: 700;
}

.tree em {
  margin-left: 22px;
  color: #8f8f8f;
  font-size: 25px;
}

.chev {
  flex: none;
  width: 22px;
  height: 28px;
  margin-right: 16px;
}

.tree .icon,
.file-list .icon {
  margin-right: 4px;
}

.l1 { padding-left: 26px; }
.l2 { padding-left: 52px; }
.l3 { padding-left: 78px; }
.l4 { padding-left: 104px; }
.l5 { padding-left: 130px; }
.l6 { padding-left: 156px; }
.l7 { padding-left: 182px; }
.l8 { padding-left: 208px; }

.tree .selected {
  z-index: 1;
  background: #464646;
  color: #e8e8e8;
}

.size {
  width: 102px;
  height: 30px;
  margin: 0 4px 0 auto;
  padding-right: 2px;
  border: 2px solid #6d6d6d;
  background: linear-gradient(#686868, #686868) 2px 2px / 94px 22px no-repeat;
  line-height: 26px;
  text-align: right;
}

.size.part {
  background-size: 60px 22px;
}

.selected .size {
  color: #93a3a3;
}

.tooltip {
  position: absolute;
  left: 310px;
  top: 46px;
  width: 106px;
  height: 38px;
  border: 1px solid #55585a;
  background: #2e3133;
  box-shadow: 0 0 0 1px #1b1b1b, 0 6px 16px rgba(0, 0, 0, 0.4);
  color: #fff;
  font-size: 22px;
  line-height: 34px;
  text-align: center;
}

.vscroll {
  width: 30px;
  padding: 6px 6px 0 8px;
  border-left: 1px solid #3d3d3d;
  background: #2a2a2a;
}

.vscroll .thumb {
  height: 76%;
  border-radius: 8px;
  background: #989898;
}

.file-list {
  width: 100%;
  border-collapse: collapse;
  table-layout: fixed;
}

.file-list th {
  height: 56px;
  background: linear-gradient(var(--text), var(--text)) 100% 16px / 2px 36px no-repeat #5b646a;
  color: #f0f0f0;
  font-weight: 400;
  text-align: left;
}

.file-list th:first-child {
  width: 418px;
}

.file-list th + th {
  padding-left: 4px;
}

.file-list td {
  height: 36px;
}

.file-list td div {
  display: flex;
  align-items: center;
}

/* editor */
.editor {
  flex: 1;
  min-width: 0;
  border-left: 2px solid var(--line);
  border-right: none;
}

.editor-tabs {
  flex: none;
  height: 50px;
  display: flex;
  align-items: center;
  background: var(--bar);
}

.editor-tabs a {
  height: 50px;
  display: flex;
  align-items: center;
  gap: 8px;
  padding: 4px 50px 0 7px;
  color: #b9b9b9;
  white-space: nowrap;
}

.editor-tabs .active {
  padding: 0 8px;
  background: #1f2024;
  border-top: 4px solid #2c6fc9;
  color: #fff;
}

.sub-tabs {
  flex: none;
  height: 62px;
  display: flex;
  border-top: 4px solid var(--bg);
  border-bottom: 2px solid #a4a4a4;
  background: linear-gradient(#3c4143, #32383c);
  box-shadow: inset 0 2px #000;
}

.sub-tabs a {
  display: flex;
  align-items: center;
  gap: 8px;
  padding: 4px 8px 0 8px;
}

.sub-tabs .active {
  margin: 2px 0 -2px;
  padding-top: 0;
  border: 2px solid #a4a4a4;
  border-bottom: none;
  background: #1f2024;
  box-shadow: inset 0 4px #2c6fc9;
  color: #fff;
}

.filter-row {
  flex: none;
  display: flex;
  align-items: center;
  padding: 6px 12px 6px 5px;
}

.filter {
  flex: 1;
  height: 48px;
  display: flex;
  align-items: center;
  padding: 0 14px 0 6px;
  border: 2px solid #a0a0a0;
  background: #3f4345;
}

.show-sql {
  margin: 0 12px 0 4px;
  color: #0f7d0f;
}

.filter .bar {
  width: 2px;
  height: 28px;
  margin-right: 6px;
  background: #a0a0a0;
}

.filter input {
  flex: 1;
  margin-left: 12px;
}

.filter input::placeholder {
  color: #a2a2a2;
}

.play {
  margin-right: 24px;
  border: 10px solid transparent;
  border-left: 12px solid #9a9a9a;
  border-right: 0;
}

.drop {
  border: 9px solid transparent;
  border-top: 10px solid #868686;
  border-bottom: 0;
}

.filter-tools {
  display: flex;
  align-items: center;
  padding-left: 6px;
}

.filter-tools .tool {
  margin-left: 11px;
}

.filter-tools .arrow {
  margin-left: 6px;
}

.filter-tools .dots {
  margin-left: 10px;
}

.result {
  flex: 1;
  min-height: 0;
  display: flex;
}

.modes {
  width: 57px;
  display: flex;
  flex-direction: column;
  padding: 0 14px 10px 3px;
}

.vtab {
  width: 40px;
  display: flex;
  flex-direction: column;
  align-items: center;
  gap: 8px;
  padding: 11px 0;
  border: 2px solid transparent;
  color: #fff;
  font-size: 25px;
  font-weight: 500;
}

.vtab span {
  writing-mode: vertical-rl;
  transform: rotate(180deg);
}

.vtab.active {
  background: #3a3a3a;
  border-color: #a4a4a4;
}

.vtab.record {
  margin-top: auto;
  padding-bottom: 0;
}

.grid-wrap {
  flex: 1;
  min-width: 0;
  display: flex;
  flex-direction: column;
}

.grid-clip {
  flex: 1;
  min-height: 0;
  overflow: hidden;
}

.grid {
  width: 100%;
  table-layout: fixed;
  border-collapse: separate;
  border-spacing: 0;
}

.c-num { width: 80px; }
.c-id { width: 290px; }
.c-name { width: 318px; }
.c-dept { width: 252px; }
.c-grade { width: 216px; }
.c-gender { width: 230px; }
.c-birth { width: 270px; }
.c-enroll { width: 280px; }

.grid th,
.grid td {
  height: 40px;
  padding: 0 10px;
  overflow: hidden;
  white-space: nowrap;
  text-align: left;
}

.grid th {
  background: var(--head);
  border-right: 2px solid #6c6e70;
  border-bottom: 2px solid #6c6e70;
  color: #e2e2e2;
  font-weight: 500;
}

.grid tbody th {
  padding-top: 4px;
}

.grid td {
  border-right: 2px solid #1f1f1f;
  border-bottom: 2px solid #1f1f1f;
  color: #c2c2c2;
  line-height: 34px;
}

.grid th:last-child,
.grid td:last-child {
  padding-right: 0;
  border-right: none;
}

.grid tbody tr:nth-child(odd) td {
  background: #272727;
}

.grid tbody.empty tr td {
  background: none;
}

.grid thead th {
  height: 56px;
  padding-bottom: 4px;
}

.grid thead div {
  display: flex;
  align-items: center;
  gap: 8px;
}

.grid thead .icon {
  margin-top: 2px;
}

.grid .corner {
  padding: 4px 8px 0 0;
  text-align: right;
}

.grid .corner .icon {
  width: 24px;
  height: 24px;
  vertical-align: middle;
}

.grid thead .current {
  border-top: 2px solid #a4a4a4;
  border-right-color: #a4a4a4;
}

.grid th.current,
.grid tr.current th {
  background: #605e6e;
}

.type {
  color: var(--blue);
  font-size: 20px;
  font-weight: 400;
}

.key {
  width: 14px;
  height: 14px;
  margin: 0 0 8px;
}

.key.fk {
  margin: 0 -2px 12px 0;
}

.sort {
  margin: 0 8px 0 auto;
  border: 9px solid transparent;
  border-top: 11px solid var(--blue);
  border-bottom: 0;
}

.grid .num {
  padding-right: 14px;
  text-align: right;
}

.grid .ko {
  padding-bottom: 8px;
  font-size: 24px;
  line-height: 30px;
}

.grid tbody tr .focus {
  background: #4a4a4a;
  outline: 4px solid #fff;
  outline-offset: -4px;
  color: #fff;
}

.hscroll {
  flex: none;
  height: 30px;
  padding: 7px 6px;
  border-top: 1px solid #4a4a4a;
  border-bottom: 2px solid #444;
  background: #393939;
}

.hscroll .thumb {
  width: 93%;
  height: 16px;
  border-radius: 8px;
  background: #9c9c9c;
}

.side-icons {
  width: 57px;
  display: flex;
  flex-direction: column;
  align-items: center;
  gap: 12px;
  padding: 0 0 4px 10px;
}

.vtab.right {
  padding-bottom: 5px;
}

.vtab.right span {
  transform: none;
}

.side-icons .bottom {
  margin-top: auto;
}

.result-bar {
  flex: none;
  height: 57px;
  display: flex;
  align-items: center;
}

.result-bar .tool:first-child {
  margin-left: 6px;
}

.result-bar .off {
  color: #6b6b6b;
}

.result-bar .off .arrow {
  border-top-color: #6b6b6b;
}

.result-bar .dots {
  margin-left: 13px;
}

.result-bar .dots.far {
  margin-left: 22px;
}

.limit {
  width: 134px;
  height: 40px;
  margin-left: 14px;
  padding-left: 8px;
  background: var(--bar);
  border-bottom: 2px solid #68686c;
  color: #f0f0f0;
}

.count .label {
  margin-left: 12px;
  color: var(--text);
}

.status {
  margin-left: auto;
  padding-right: 20px;
  display: flex;
  align-items: center;
  gap: 16px;
}

/* status bar */
.statusbar {
  flex: none;
  height: 46px;
  display: flex;
  align-items: center;
  gap: 12px;
  padding: 2px 0 0 4px;
  color: #f0f0f0;
}

.picker {
  position: relative;
  margin: 0 12px 4px 4px;
}

.picker select {
  appearance: none;
  width: 286px;
  height: 40px;
  padding-left: 16px;
  border-radius: 10px;
  background: #757577;
  font-size: 25px;
}

.knob {
  position: absolute;
  top: 3px;
  right: 2px;
  width: 33px;
  height: 34px;
  display: flex;
  align-items: center;
  justify-content: center;
  border-radius: 8px;
  background: #1a66e0;
  pointer-events: none;
}

.knob svg {
  width: 24px;
  height: 24px;
}

.crumb {
  margin: 0 2px 0 8px;
  border: 9px solid transparent;
  border-left: 9px solid #111;
  border-right: 0;
}

.locale {
  align-self: stretch;
  display: flex;
  align-items: center;
  width: 770px;
  margin-left: auto;
  border-left: 2px solid #5f5f63;
  font-size: 25px;
}

.locale span {
  padding: 6px 12px;
}

.locale span + span {
  border-left: 2px solid #5f5f63;
  padding-right: 0;
}
```
